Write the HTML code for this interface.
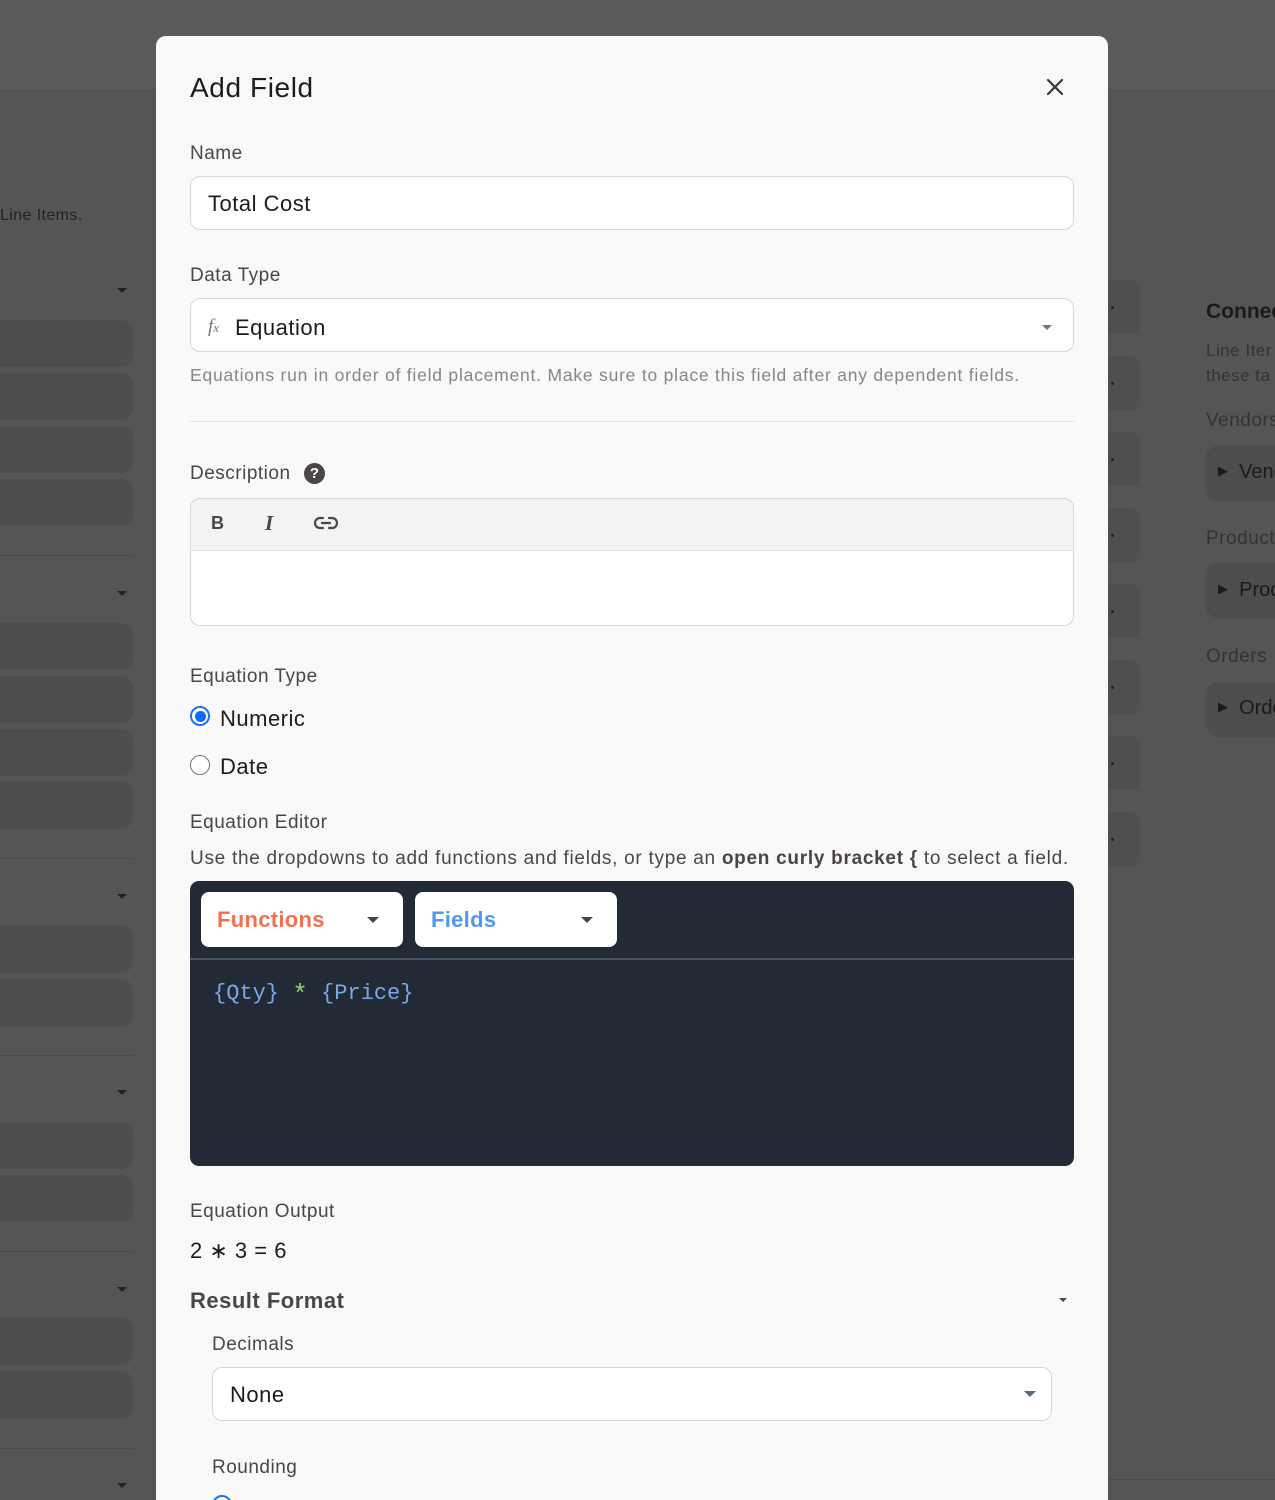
<!DOCTYPE html>
<html style="width:1275px;height:1500px;overflow:hidden"><head><meta charset="utf-8"><style>
*{box-sizing:border-box;margin:0;padding:0}
body{width:1275px;height:1500px;overflow:hidden;background:#555;font-family:"Liberation Sans",sans-serif;position:relative}
.a{position:absolute}
.blk{position:absolute;left:-10px;width:143px;height:47px;background:#4d4d4d;border-radius:12px}
.ln{position:absolute;left:0;width:133px;height:1px;background:#4a4a4a}
.tri{position:absolute;width:0;height:0;border-left:5px solid transparent;border-right:5px solid transparent;border-top:5px solid #222}
.rb{position:absolute;left:1108px;width:32px;height:54px;background:#4f4f4f;border-radius:0 10px 10px 0}
.dot{position:absolute;left:1111px;width:3px;height:3px;background:#222;border-radius:50%}
.m{position:absolute;left:156px;top:36px;width:952px;height:1464px;background:#f9f9f9;border-radius:10px 10px 0 0}
.lbl{position:absolute;color:#4b4547;font-size:19px;letter-spacing:0.5px}
.inp{position:absolute;background:#fff;border:1.5px solid #d8d6d6;border-radius:10px}
.txt{position:absolute;color:#1e1b1c;font-size:22px;letter-spacing:0.5px}
</style></head><body>
<div class="a" style="left:0;top:0;width:1275px;height:90px;background:#5a5a5a"></div>
<div class="a" style="left:0;top:90px;width:156px;height:1px;background:#4f4f4f"></div>
<div class="a" style="left:1108px;top:90px;width:167px;height:1px;background:#4f4f4f"></div>
<div class="a" style="left:0;top:207px;color:#222;font-size:16px;letter-spacing:0.4px">Line Items.</div>
<div class="tri" style="left:117px;top:288px"></div>
<div class="blk" style="top:320px"></div><div class="blk" style="top:373px"></div><div class="blk" style="top:426px"></div><div class="blk" style="top:479px"></div>
<div class="ln" style="top:555px"></div>
<div class="tri" style="left:117px;top:591px"></div>
<div class="blk" style="top:623px"></div><div class="blk" style="top:676px"></div><div class="blk" style="top:729px"></div><div class="blk" style="top:782px"></div>
<div class="ln" style="top:858px"></div>
<div class="tri" style="left:117px;top:894px"></div>
<div class="blk" style="top:926px"></div><div class="blk" style="top:979px"></div>
<div class="ln" style="top:1055px"></div>
<div class="tri" style="left:117px;top:1090px"></div>
<div class="blk" style="top:1122px"></div><div class="blk" style="top:1175px"></div>
<div class="ln" style="top:1251px"></div>
<div class="tri" style="left:117px;top:1287px"></div>
<div class="blk" style="top:1318px"></div><div class="blk" style="top:1371px"></div>
<div class="ln" style="top:1448px"></div>
<div class="tri" style="left:117px;top:1483px"></div>

<div class="rb" style="top:280px"></div><div class="dot" style="top:306px"></div>
<div class="rb" style="top:356px"></div><div class="dot" style="top:382px"></div>
<div class="rb" style="top:432px"></div><div class="dot" style="top:458px"></div>
<div class="rb" style="top:508px"></div><div class="dot" style="top:534px"></div>
<div class="rb" style="top:584px"></div><div class="dot" style="top:610px"></div>
<div class="rb" style="top:660px"></div><div class="dot" style="top:686px"></div>
<div class="rb" style="top:736px"></div><div class="dot" style="top:762px"></div>
<div class="rb" style="top:812px"></div><div class="dot" style="top:838px"></div>
<div class="a" style="left:1206px;top:300px;color:#1a1a1a;font-size:21px;font-weight:bold;white-space:nowrap">Connected</div>
<div class="a" style="left:1206px;top:338px;color:#333;font-size:17px;line-height:25px;white-space:nowrap;letter-spacing:0.5px">Line Iter<br>these ta</div>
<div class="a" style="left:1206px;top:410px;color:#333;font-size:19px;white-space:nowrap;letter-spacing:0.5px">Vendors</div>
<div class="a" style="left:1206px;top:446px;width:80px;height:55px;background:#4d4d4d;border-radius:12px"></div>
<div class="a" style="left:1218px;top:461px;color:#1a1a1a;font-size:20px;white-space:nowrap"><span style="font-size:13px;position:relative;top:-3px">▶</span>&nbsp; Vendors</div>
<div class="a" style="left:1206px;top:528px;color:#333;font-size:19px;white-space:nowrap;letter-spacing:0.5px">Products</div>
<div class="a" style="left:1206px;top:563px;width:80px;height:55px;background:#4d4d4d;border-radius:12px"></div>
<div class="a" style="left:1218px;top:579px;color:#1a1a1a;font-size:20px;white-space:nowrap"><span style="font-size:13px;position:relative;top:-3px">▶</span>&nbsp; Products</div>
<div class="a" style="left:1206px;top:646px;color:#333;font-size:19px;white-space:nowrap;letter-spacing:0.5px">Orders</div>
<div class="a" style="left:1206px;top:682px;width:80px;height:55px;background:#4d4d4d;border-radius:12px"></div>
<div class="a" style="left:1218px;top:697px;color:#1a1a1a;font-size:20px;white-space:nowrap"><span style="font-size:13px;position:relative;top:-3px">▶</span>&nbsp; Orders</div>
<div class="a" style="left:1108px;top:1479px;width:167px;height:1px;background:#4a4a4a"></div>

<div class="m"></div>
<div class="a" style="left:190px;top:72px;font-size:28px;color:#1e1b1c;letter-spacing:0.6px">Add Field</div>
<svg class="a" style="left:1045px;top:77px" width="20" height="20" viewBox="0 0 20 20"><path d="M3 3L17 17M17 3L3 17" stroke="#3a3536" stroke-width="2.2" stroke-linecap="round"/></svg>

<div class="lbl" style="left:190px;top:143px">Name</div>
<div class="inp" style="left:190px;top:176px;width:884px;height:54px"></div>
<div class="txt" style="left:208px;top:191px">Total Cost</div>

<div class="lbl" style="left:190px;top:265px">Data Type</div>
<div class="inp" style="left:190px;top:298px;width:884px;height:54px"></div>
<div class="a" style="left:208px;top:316px;font-size:19px;font-style:italic;color:#777;font-family:'Liberation Serif',serif">f<span style="font-size:13px">x</span></div>
<div class="txt" style="left:235px;top:315px">Equation</div>
<div class="tri" style="left:1042px;top:325px;border-top-color:#777"></div>
<div class="a" style="left:190px;top:365px;color:#8a8486;font-size:17.5px;white-space:nowrap;letter-spacing:0.78px">Equations run in order of field placement. Make sure to place this field after any dependent fields.</div>
<div class="a" style="left:190px;top:421px;width:884px;height:1px;background:#e3e1e1"></div>

<div class="lbl" style="left:190px;top:463px">Description</div>
<div class="a" style="left:304px;top:463px;width:21px;height:21px;border-radius:50%;background:#4b4547;color:#fff;font-size:15px;font-weight:bold;text-align:center;line-height:21px">?</div>
<div class="inp" style="left:190px;top:498px;width:884px;height:128px;overflow:hidden"><div style="height:52px;background:#f3f3f3;border-bottom:1.5px solid #e2e0e0"></div></div>
<div class="a" style="left:211px;top:513px;font-size:18px;font-weight:bold;color:#4b4547">B</div>
<div class="a" style="left:265px;top:511px;font-size:21px;font-weight:bold;font-style:italic;color:#4b4547;font-family:'Liberation Serif',serif">I</div>
<svg class="a" style="left:314px;top:515px" width="24" height="16" viewBox="0 0 24 16"><path d="M9 3H6a5 5 0 0 0 0 10h3M15 3h3a5 5 0 0 1 0 10h-3M8 8h8" fill="none" stroke="#4b4547" stroke-width="2.2" stroke-linecap="round"/></svg>

<div class="lbl" style="left:190px;top:666px">Equation Type</div>
<div class="a" style="left:190px;top:706px;width:20px;height:20px;border-radius:50%;border:2px solid #1a73f0;background:#fff"><div style="margin:2.5px;width:11px;height:11px;border-radius:50%;background:#0a6cf5"></div></div>
<div class="txt" style="left:220px;top:706px">Numeric</div>
<div class="a" style="left:190px;top:755px;width:20px;height:20px;border-radius:50%;border:1.5px solid #777;background:#fff"></div>
<div class="txt" style="left:220px;top:754px">Date</div>

<div class="lbl" style="left:190px;top:812px">Equation Editor</div>
<div class="a" style="left:190px;top:848px;color:#4b4547;font-size:19px;white-space:nowrap;letter-spacing:0.72px">Use the dropdowns to add functions and fields, or type an <b>open curly bracket {</b> to select a field.</div>
<div class="a" style="left:190px;top:881px;width:884px;height:285px;background:#222a35;border-radius:9px"></div>
<div class="a" style="left:190px;top:958px;width:884px;height:1.5px;background:#4a5563"></div>
<div class="a" style="left:201px;top:892px;width:202px;height:55px;background:#fff;border-radius:8px"></div>
<div class="a" style="left:217px;top:907px;font-size:22px;font-weight:bold;color:#f2704f;letter-spacing:0.3px">Functions</div>
<div class="tri" style="left:367px;top:917px;border-top-color:#4b4547;border-width:6px 6px 0"></div>
<div class="a" style="left:415px;top:892px;width:202px;height:55px;background:#fff;border-radius:8px"></div>
<div class="a" style="left:431px;top:907px;font-size:22px;font-weight:bold;color:#4f96f5;letter-spacing:0.3px">Fields</div>
<div class="tri" style="left:581px;top:917px;border-top-color:#4b4547;border-width:6px 6px 0"></div>
<div class="a" style="left:213px;top:977px;font-family:'Liberation Mono','DejaVu Sans Mono',monospace;font-size:22px;color:#7aa7e8;white-space:pre">{Qty} <span style="color:#9fd36a;font-size:26px;position:relative;top:3px">*</span> {Price}</div>

<div class="lbl" style="left:190px;top:1201px">Equation Output</div>
<div class="txt" style="left:190px;top:1238px">2 ∗ 3 = 6</div>
<div class="a" style="left:190px;top:1288px;font-size:22px;font-weight:bold;color:#4b4547;letter-spacing:0.5px">Result Format</div>
<div class="tri" style="left:1059px;top:1298px;border-top-color:#4b4547;border-width:4px 4px 0"></div>
<div class="lbl" style="left:212px;top:1334px">Decimals</div>
<div class="inp" style="left:212px;top:1367px;width:840px;height:54px"></div>
<div class="txt" style="left:230px;top:1382px">None</div>
<div class="tri" style="left:1024px;top:1391px;border-top-color:#5a6a7c;border-width:6px 6px 0"></div>
<div class="lbl" style="left:212px;top:1457px">Rounding</div>
<div class="a" style="left:212px;top:1495px;width:20px;height:5px;overflow:hidden"><div style="width:20px;height:20px;border-radius:50%;border:2px solid #1a73f0;background:#fff"></div></div>
</body></html>
